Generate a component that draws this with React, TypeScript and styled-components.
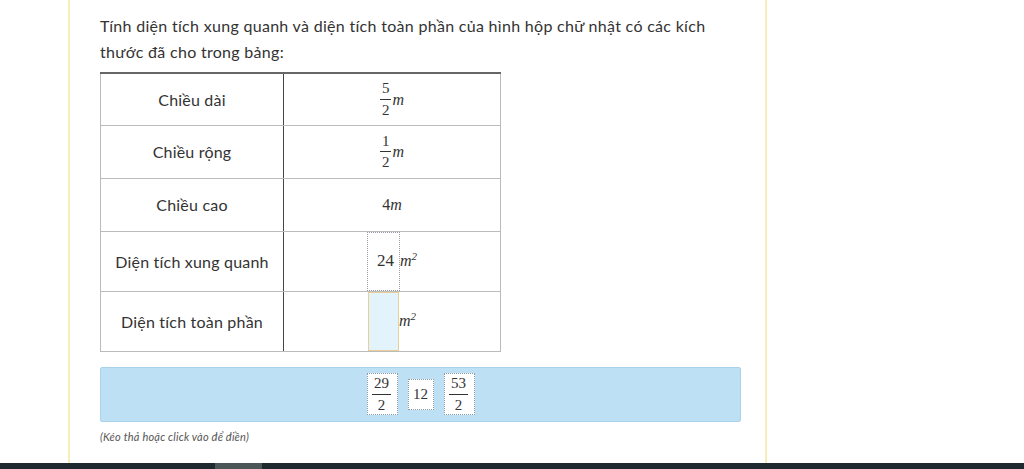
import React from "react";
import styled, { createGlobalStyle } from "styled-components";

const Global = createGlobalStyle`
  html, body { margin: 0; padding: 0; background: #fff; }
  body { font-family: "Lato", "Noto Sans", sans-serif; color: #333; }
`;

const Page = styled.div`
  width: 1024px;
  height: 469px;
  display: flex;
  flex-direction: column;
  overflow: hidden;
`;

const Sheet = styled.div`
  flex: 1;
  width: 699px;
  margin-left: 68px;
  border-left: 2px solid #f6eeb8;
  border-right: 2px solid #f6eeb8;
  padding: 13px 0 0 30px;
  box-sizing: border-box;
`;

const Question = styled.p`
  margin: 0 0 7px;
  width: 630px;
  font-size: 16px;
  line-height: 26px;
  letter-spacing: 0.3px;
  color: #333;
`;

const Grid = styled.table`
  border-collapse: collapse;
  width: 401px;
  font-size: 16px;
  color: #333;
  border-top: 2px solid #666;
`;

const Row = styled.tr<{ $h: number }>`
  height: ${(p) => p.$h}px;
`;

const Label = styled.td`
  width: 182px;
  text-align: center;
  border: 1px solid #bbb;
  border-right: 1px solid #444;
  padding: 0;
  letter-spacing: 0.2px;
`;

const Value = styled.td`
  text-align: center;
  border: 1px solid #bbb;
  padding: 0;
  line-height: 0;
  font-family: "Liberation Serif", "DejaVu Serif", serif;
  font-size: 16px;
`;

const Math = styled.span`
  display: inline-flex;
  align-items: center;
  vertical-align: middle;
  line-height: 1.2;
  font-family: "Liberation Serif", "DejaVu Serif", serif;
`;

const Frac = styled.span<{ $size?: number }>`
  display: inline-flex;
  flex-direction: column;
  align-items: center;
  font-size: ${(p) => p.$size ?? 15}px;
  line-height: 1.1;
  margin-right: 1px;
`;

const Num = styled.span`
  padding: 0 2px 2px;
  border-bottom: 1px solid #333;
`;

const Den = styled.span`
  padding: 2px 2px 0;
`;

const Ital = styled.i`
  font-size: 16px;
`;

const Slot = styled.span<{ $filled?: boolean }>`
  display: inline-flex;
  align-items: center;
  justify-content: flex-end;
  padding-right: 5px;
  box-sizing: border-box;
  width: ${(p) => (p.$filled ? 33 : 31)}px;
  height: 59px;
  font-size: 17px;
  border: ${(p) => (p.$filled ? "1px dotted #99a" : "1px solid #e9cf96")};
  background: ${(p) => (p.$filled ? "#fff" : "#e3f3fc")};
`;

const Sup = styled.sup`
  font-size: 11px;
  line-height: 0;
  vertical-align: 6px;
`;

const Bank = styled.div`
  margin-top: 15px;
  width: 641px;
  height: 55px;
  box-sizing: border-box;
  background: #bde0f5;
  border: 1px solid #a9d2ec;
  border-radius: 2px;
  display: flex;
  align-items: center;
  justify-content: center;
  gap: 10px;
`;

const Chip = styled.div<{ $tall?: boolean }>`
  box-sizing: border-box;
  background: #fff;
  border: 1px dotted #8a9aa8;
  height: ${(p) => (p.$tall ? 42 : 31)}px;
  width: ${(p) => (p.$tall ? 31 : 26)}px;
  display: flex;
  align-items: center;
  justify-content: center;
  font-family: "Liberation Serif", "DejaVu Serif", serif;
  font-size: 15px;
  color: #333;
`;

const Hint = styled.div`
  margin-top: 8px;
  font-size: 11px;
  font-style: italic;
  letter-spacing: 0.2px;
  color: #555;
`;

const BottomBar = styled.div`
  height: 6px;
  background: #1f2a30;
  display: flex;
`;

const Thumb = styled.div`
  margin-left: 215px;
  width: 47px;
  background: #4b5659;
`;

const F = ({ n, d, size }: { n: string; d: string; size?: number }) => (
  <Frac $size={size}>
    <Num>{n}</Num>
    <Den>{d}</Den>
  </Frac>
);

export default function App() {
  return (
    <>
      <Global />
      <Page>
        <Sheet>
          <Question>
            Tính diện tích xung quanh và diện tích toàn phần của hình hộp chữ nhật có các kích
            thước đã cho trong bảng:
          </Question>
          <Grid>
            <tbody>
              <Row $h={52}>
                <Label>Chiều dài</Label>
                <Value>
                  <Math>
                    <F n="5" d="2" />
                    <Ital>m</Ital>
                  </Math>
                </Value>
              </Row>
              <Row $h={53}>
                <Label>Chiều rộng</Label>
                <Value>
                  <Math>
                    <F n="1" d="2" />
                    <Ital>m</Ital>
                  </Math>
                </Value>
              </Row>
              <Row $h={53}>
                <Label>Chiều cao</Label>
                <Value>
                  <Math>
                    4<Ital>m</Ital>
                  </Math>
                </Value>
              </Row>
              <Row $h={60}>
                <Label>Diện tích xung quanh</Label>
                <Value>
                  <Math>
                    <Slot $filled>24</Slot>
                    <Ital>
                      m<Sup>2</Sup>
                    </Ital>
                  </Math>
                </Value>
              </Row>
              <Row $h={60}>
                <Label>Diện tích toàn phần</Label>
                <Value>
                  <Math>
                    <Slot />
                    <Ital>
                      m<Sup>2</Sup>
                    </Ital>
                  </Math>
                </Value>
              </Row>
            </tbody>
          </Grid>
          <Bank>
            <Chip $tall>
              <F n="29" d="2" size={15} />
            </Chip>
            <Chip>12</Chip>
            <Chip $tall>
              <F n="53" d="2" size={15} />
            </Chip>
          </Bank>
          <Hint>(Kéo thả hoặc click vào để điền)</Hint>
        </Sheet>
        <BottomBar>
          <Thumb />
        </BottomBar>
      </Page>
    </>
  );
}
